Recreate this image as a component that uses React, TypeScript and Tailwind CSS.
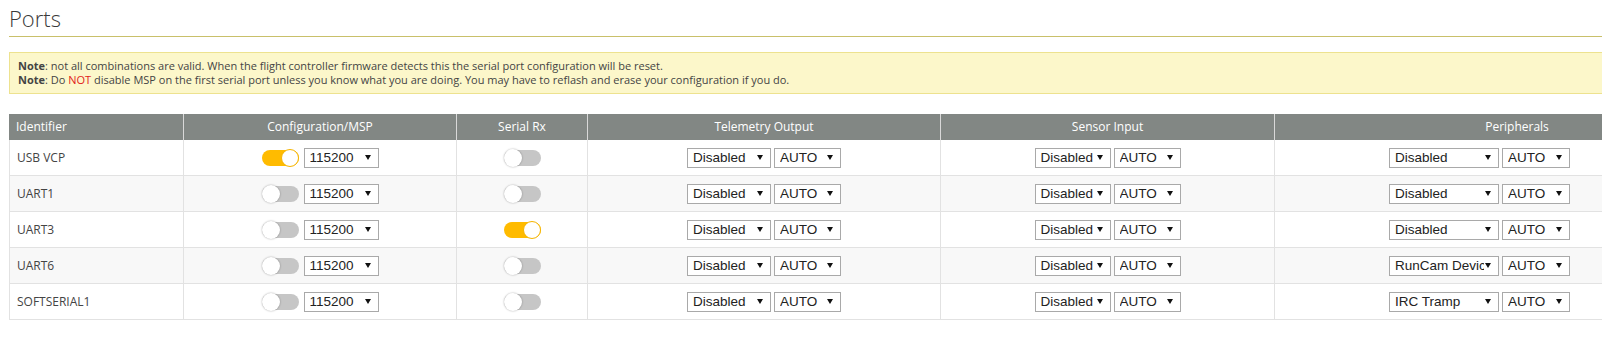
const rows = [
  { id: "USB VCP", msp: true, rx: false, periph: "Disabled" },
  { id: "UART1", msp: false, rx: false, periph: "Disabled" },
  { id: "UART3", msp: false, rx: true, periph: "Disabled" },
  { id: "UART6", msp: false, rx: false, periph: "RunCam Device" },
  { id: "SOFTSERIAL1", msp: false, rx: false, periph: "IRC Tramp" },
];

const cols = "grid grid-cols-[175px_273px_131px_353px_334px_484px]";

const Toggle = ({ on }: { on?: boolean }) => {
  return (
    <span
      className={`relative inline-block h-[16px] w-[37px] shrink-0 rounded-full ${
        on ? "bg-[#ffbb00]" : "bg-[#c6c6c6]"
      }`}
    >
      <span
        className={`absolute top-[-1px] h-[18px] w-[18px] rounded-full bg-white ${
          on ? "right-0 border border-[#f5b400]" : "left-0 shadow-[0_0_2px_rgba(0,0,0,0.35)]"
        }`}
      />
    </span>
  );
};

const Select = ({ value, w }: { value: string; w: string }) => {
  return (
    <div
      className={`flex h-[20px] items-center border border-[#a9a9a9] bg-white pl-[5px] pr-[7px] ${w}`}
      style={{ fontFamily: '"Liberation Sans", Arial, sans-serif' }}
    >
      <span className="flex-1 overflow-hidden whitespace-nowrap text-[13.5px] leading-[18px] text-[#222]">
        {value}
      </span>
      <svg width="6" height="5" viewBox="0 0 6 5" className="ml-[1px] shrink-0">
        <path d="M0 0h6L3 5z" fill="#111" />
      </svg>
    </div>
  );
};

const App = () => {
  return (
    <div
      className="h-[337px] w-[1602px] overflow-hidden bg-white text-[#444]"
      style={{ fontFamily: '"Open Sans", "DejaVu Sans", sans-serif' }}
    >
      <div className="ml-[9px] w-[1750px]">
        <div className="border-b border-[#c9c06a] pb-[3px] pt-[3px]">
          <h2 className="text-[22px] font-light leading-[30px] text-[#3a3a3a]">Ports</h2>
        </div>

        <div className="mt-[15px] border border-[#ede28f] bg-[#fcf7ca] px-[8px] py-[6px] text-[11px] leading-[14px] text-[#444]">
          <p>
            <span className="font-bold">Note</span>: not all combinations are valid. When the flight
            controller firmware detects this the serial port configuration will be reset.
          </p>
          <p>
            <span className="font-bold">Note</span>: Do <span className="text-[#e2231a]">NOT</span>{" "}
            disable MSP on the first serial port unless you know what you are doing. You may have to
            reflash and erase your configuration if you do.
          </p>
        </div>

        <div className="mt-[20px] text-[12px]">
          <div className={`${cols} h-[26px] items-stretch bg-[#828784] text-white`}>
            <div className="flex items-center rounded-tl-[4px] border-r border-[#d9d9d9] pl-[7px]">
              Identifier
            </div>
            <div className="flex items-center justify-center border-r border-[#d9d9d9]">
              Configuration/MSP
            </div>
            <div className="flex items-center justify-center border-r border-[#d9d9d9]">
              Serial Rx
            </div>
            <div className="flex items-center justify-center border-r border-[#d9d9d9]">
              Telemetry Output
            </div>
            <div className="flex items-center justify-center border-r border-[#d9d9d9]">
              Sensor Input
            </div>
            <div className="flex items-center justify-center">Peripherals</div>
          </div>

          {rows.map((r, i) => (
            <div
              key={r.id}
              className={`${cols} h-[36px] ${i % 2 === 1 ? "bg-[#f8f8f8]" : "bg-white"}`}
            >
              <div className="flex items-center border-b border-l border-r border-[#e2e2e2] pl-[7px]">
                {r.id}
              </div>
              <div className="flex items-center justify-center gap-[5px] border-b border-r border-[#e2e2e2]">
                <Toggle on={r.msp} />
                <Select value="115200" w="w-[75px]" />
              </div>
              <div className="flex items-center justify-center border-b border-r border-[#e2e2e2]">
                <Toggle on={r.rx} />
              </div>
              <div className="flex items-center justify-center gap-[3px] border-b border-r border-[#e2e2e2]">
                <Select value="Disabled" w="w-[84px]" />
                <Select value="AUTO" w="w-[67px]" />
              </div>
              <div className="flex items-center justify-center gap-[3px] border-b border-r border-[#e2e2e2]">
                <Select value="Disabled" w="w-[76px]" />
                <Select value="AUTO" w="w-[67px]" />
              </div>
              <div className="flex items-center gap-[3px] border-b border-r border-[#e2e2e2] pl-[114px]">
                <Select value={r.periph} w="w-[110px]" />
                <Select value="AUTO" w="w-[68px]" />
              </div>
            </div>
          ))}
        </div>
      </div>
    </div>
  );
};

export default App;
